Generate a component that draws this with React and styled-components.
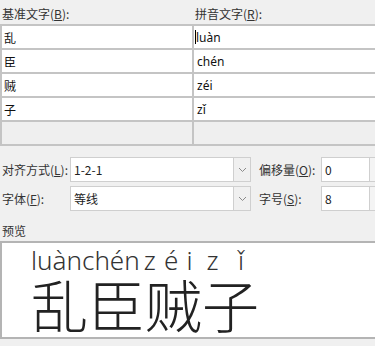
import React from "react";
import styled, { createGlobalStyle } from "styled-components";

const GlobalStyle = createGlobalStyle`
  html, body {
    margin: 0;
    padding: 0;
    background: #f0f0f0;
  }
  body {
    font-family: "Noto Sans CJK SC", "Noto Sans", sans-serif;
    font-size: 12px;
    color: #000;
  }
`;

const rows = [
  { base: "乱", ruby: "luàn" },
  { base: "臣", ruby: "chén" },
  { base: "贼", ruby: "zéi" },
  { base: "子", ruby: "zǐ" },
  { base: "", ruby: "" },
];

const Hotkey = ({ label, k }) => (
  <>
    {label}(<U>{k}</U>):
  </>
);

const ChevronIcon = () => (
  <svg width="9" height="6" viewBox="0 0 9 6">
    <path d="M1 1l3.5 3.5L8 1" fill="none" stroke="#8a8a8a" strokeWidth="1" />
  </svg>
);

const App = () => {
  return (
    <Page>
      <GlobalStyle />
      <HeaderRow>
        <Label>
          <Hotkey label="基准文字" k="B" />
        </Label>
        <Label>
          <Hotkey label="拼音文字" k="R" />
        </Label>
      </HeaderRow>

      <Table>
        {rows.map((r, i) => (
          <Row key={i} empty={!r.base}>
            <Cell>{r.base}</Cell>
            <Cell right>
              {i === 0 && <Caret />}
              {r.ruby}
            </Cell>
          </Row>
        ))}
      </Table>

      <Controls>
        <ControlRow>
          <FieldLabel>
            <Hotkey label="对齐方式" k="L" />
          </FieldLabel>
          <Combo>
            <ComboText>1-2-1</ComboText>
            <ComboButton>
              <ChevronIcon />
            </ComboButton>
          </Combo>
          <SideLabel>
            <Hotkey label="偏移量" k="O" />
          </SideLabel>
          <Spin>
            <SpinText>0</SpinText>
            <SpinButton />
          </Spin>
        </ControlRow>
        <ControlRow>
          <FieldLabel>
            <Hotkey label="字体" k="F" />
          </FieldLabel>
          <Combo>
            <ComboText>等线</ComboText>
            <ComboButton>
              <ChevronIcon />
            </ComboButton>
          </Combo>
          <SideLabel>
            <Hotkey label="字号" k="S" />
          </SideLabel>
          <Spin>
            <SpinText>8</SpinText>
            <SpinButton />
          </Spin>
        </ControlRow>
      </Controls>

      <PreviewLabel>预览</PreviewLabel>
      <Preview>
        <RubyLine>
          {rows
            .filter((r) => r.base)
            .map((r, i) =>
              r.ruby.length > 3 ? (
                <RubyCell key={i}>{r.ruby}</RubyCell>
              ) : (
                <RubyCell key={i} spread>
                  {r.ruby.split("").map((c, j) => (
                    <span key={j}>{c}</span>
                  ))}
                </RubyCell>
              )
            )}
        </RubyLine>
        <BaseLine>乱臣贼子</BaseLine>
      </Preview>
    </Page>
  );
};
export default App;

const Page = styled.div`
  width: 375px;
  height: 346px;
  overflow: hidden;
  background: #f0f0f0;
`;

const U = styled.span`
  text-decoration: underline;
  text-underline-offset: 1px;
`;

const HeaderRow = styled.div`
  display: grid;
  grid-template-columns: 193px 1fr;
  height: 25px;
  align-items: center;
`;

const Label = styled.div`
  padding-left: 2px;
  color: #333;
  line-height: 1;
  padding-top: 2px;
`;

const Table = styled.div`
  display: flex;
  flex-direction: column;
  border-top: 2px solid #c4c4c4;
  border-left: 2px solid #c4c4c4;
  box-sizing: border-box;
  margin-top: -1px;
`;

const Row = styled.div`
  display: grid;
  grid-template-columns: 190px 1fr;
  height: 22px;
  border-bottom: 2px solid #c4c4c4;
  background: ${(p) => (p.empty ? "#efefef" : "#fff")};
`;

const Cell = styled.div`
  display: flex;
  align-items: center;
  padding-left: ${(p) => (p.right ? "3px" : "2px")};
  border-left: ${(p) => (p.right ? "2px solid #c4c4c4" : "none")};
  font-size: 12px;
  color: #111;
  font-family: ${(p) =>
    p.right ? '"Noto Sans", "Noto Sans CJK SC", sans-serif' : '"Noto Sans CJK SC", sans-serif'};
`;

const Caret = styled.span`
  display: inline-block;
  width: 1px;
  height: 14px;
  background: #000;
  margin-left: -2px;
`;

const Controls = styled.div`
  display: flex;
  flex-direction: column;
  gap: 4px;
  margin-top: 11px;
`;

const ControlRow = styled.div`
  display: flex;
  align-items: center;
  height: 25px;
`;

const FieldLabel = styled.div`
  width: 70px;
  padding-left: 2px;
  box-sizing: border-box;
  color: #333;
  flex-shrink: 0;
`;

const Combo = styled.div`
  display: flex;
  width: 181px;
  height: 25px;
  box-sizing: border-box;
  border: 1px solid #cfcfcf;
  background: #fff;
  flex-shrink: 0;
`;

const ComboText = styled.div`
  flex: 1;
  display: flex;
  align-items: center;
  padding-left: 3px;
  color: #222;
`;

const ComboButton = styled.div`
  width: 16px;
  display: flex;
  align-items: center;
  justify-content: center;
  background: #f0f0f0;
  border-left: 1px solid #cfcfcf;
`;

const SideLabel = styled.div`
  width: 62px;
  padding-left: 8px;
  color: #333;
  flex-shrink: 0;
`;

const Spin = styled.div`
  display: flex;
  height: 25px;
  flex-shrink: 0;
`;

const SpinText = styled.div`
  width: 49px;
  box-sizing: border-box;
  border: 1px solid #cfcfcf;
  background: #fff;
  display: flex;
  align-items: center;
  padding-left: 3px;
  color: #222;
`;

const SpinButton = styled.div`
  width: 16px;
  box-sizing: border-box;
  border: 1px solid #cfcfcf;
  border-left: none;
  background: #f4f4f4;
`;

const PreviewLabel = styled.div`
  margin-top: 9px;
  padding-left: 2px;
  color: #333;
  height: 21px;
  line-height: 21px;
`;

const Preview = styled.div`
  box-sizing: border-box;
  height: 98px;
  border: 2px solid #b4b4b4;
  border-right: none;
  background: #fff;
  padding-left: 29px;
  padding-top: 1px;
  overflow: hidden;
`;

const RubyLine = styled.div`
  display: flex;
  height: 29px;
  align-items: flex-end;
  font-family: "Noto Sans", sans-serif;
  font-weight: 300;
  font-size: 26px;
  color: #333;
  line-height: 1;
`;

const RubyCell = styled.div`
  ${(p) => (p.spread ? "width: 57px;" : "")}
  display: flex;
  justify-content: ${(p) => (p.spread ? "space-around" : "flex-start")};
  white-space: nowrap;
`;

const BaseLine = styled.div`
  font-family: "Noto Sans CJK SC", sans-serif;
  font-weight: 300;
  font-size: 57px;
  line-height: 60px;
  color: #222;
`;
